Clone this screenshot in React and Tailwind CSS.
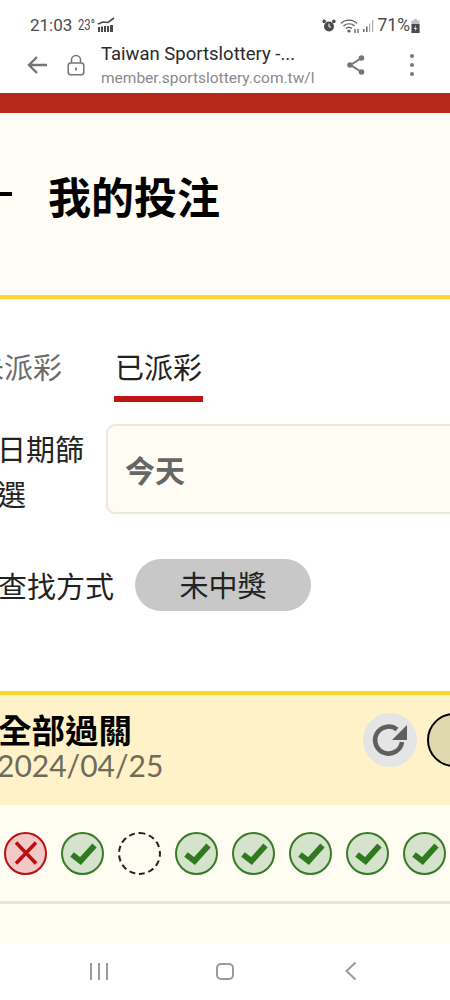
import React from "react";

const CJK = "font-['Noto_Sans_CJK_TC','Noto_Sans',sans-serif]";

function Check() {
  return (
    <div className="w-[43px] h-[43px] shrink-0 rounded-full bg-[#D5E2CC] border-2 border-[#367C25] flex items-center justify-center">
      <svg width="36" height="36" viewBox="0 0 36 36">
        <path d="M7 19.5 L15.5 26 L29.5 10.5" fill="none" stroke="#2F7A1E" strokeWidth="5.8" strokeLinecap="butt" strokeLinejoin="miter" />
      </svg>
    </div>
  );
}

function Cross() {
  return (
    <div className="w-[43px] h-[43px] shrink-0 rounded-full bg-[#F2C9C7] border-2 border-[#BC0F12] flex items-center justify-center">
      <svg width="30" height="30" viewBox="0 0 30 30">
        <path d="M5 4.5 L25 25.5 M25 4.5 L5 25.5" fill="none" stroke="#BC0F12" strokeWidth="3.6" strokeLinecap="butt" />
      </svg>
    </div>
  );
}

function StatusBar() {
  return (
    <div className="h-[35px] pt-[15px] pl-[30px] pr-[30px] flex items-center justify-between font-['Roboto',sans-serif] text-[#4a4a4a]">
      <div className="flex items-center">
        <span className="text-[17px] leading-none">21:03</span>
        <span className="text-[15px] leading-none ml-[6px] scale-x-75 origin-left w-[19px]">23°</span>
        <svg width="18" height="16" viewBox="0 0 18 16">
          <path d="M1 7 L6 5 L11 5.5 L17 1" fill="none" stroke="#4a4a4a" strokeWidth="1.6" />
          <path d="M1 10h2v5H1z M4 9.5h2V15H4z M7 9h2v6H7z M10 9h2v6h-2z M13 8h3v7h-3z" fill="#4a4a4a" />
        </svg>
      </div>
      <div className="flex items-center mt-[1px]">
        <svg width="14" height="14" viewBox="0 0 14 14">
          <circle cx="7" cy="7.5" r="5" fill="#4a4a4a" />
          <circle cx="2.2" cy="2.4" r="1.8" fill="#4a4a4a" />
          <circle cx="11.8" cy="2.4" r="1.8" fill="#4a4a4a" />
          <path d="M7 4.6V8h2" fill="none" stroke="#fff" strokeWidth="1" />
        </svg>
        <svg width="20" height="16" viewBox="0 0 20 16" className="ml-[4px]" fill="none" stroke="#5a5a5a" strokeWidth="1.2">
          <path d="M1 5.5 C5 1 13 1 17 5.5" />
          <path d="M3.5 8 C6.5 5 11.5 5 14.5 8" />
          <path d="M6 10.5 C8 9 10 9 12 10.5" />
          <circle cx="9" cy="13" r="1" fill="#5a5a5a" />
          <path d="M15 11v4 M18 15v-4" />
        </svg>
        <svg width="13" height="13" viewBox="0 0 13 13" className="ml-[2px]">
          <path d="M1 10h1.5v3H1z M4 7.5h1.5V13H4z" fill="#666" />
          <path d="M7 4.5h1.2V13H7z M10 1h1.2v12H10z" fill="#aaa" />
        </svg>
        <span className="text-[17.5px] leading-none ml-[3px]">71%</span>
        <svg width="9" height="14" viewBox="0 0 9 14" className="ml-[1px]">
          <path d="M3 0h3v1.5h2.5V14H.5V1.5H3z" fill="#c0c0c0" />
          <path d="M.5 5h8v9h-8z" fill="#4a4a4a" />
          <path d="M5 6 L3 10h1.5L4 12.5 6 9H4.5z" fill="#fff" />
        </svg>
      </div>
    </div>
  );
}

function BrowserBar() {
  return (
    <div className="h-[58px] flex items-center font-['Roboto',sans-serif]">
      <svg width="24" height="24" viewBox="0 0 24 24" className="ml-[26px] mt-[2px] shrink-0" fill="none" stroke="#757575" strokeWidth="2.4">
        <path d="M21 12H3 M11 4 L3 12 L11 20" />
      </svg>
      <svg width="18" height="22" viewBox="0 0 18 22" className="ml-[17px] mt-[2px] shrink-0" fill="none" stroke="#757575" strokeWidth="1.5">
        <path d="M4.5 9V6a4.5 4.5 0 0 1 9 0v3" />
        <rect x="1.2" y="9" width="15.6" height="11.8" rx="2.5" />
        <path d="M9 13.5v3" strokeWidth="1.8" />
      </svg>
      <div className="ml-[16px] w-[213px] overflow-hidden shrink-0 mt-[3px]">
        <div className="text-[18.5px] leading-[24px] text-[#2a2a2a] whitespace-nowrap">Taiwan Sportslottery -...</div>
        <div className="text-[15.5px] leading-[22px] text-[#8a8a8a] whitespace-nowrap mt-[1px]">member.sportslottery.com.tw/lo</div>
      </div>
      <svg width="20" height="22" viewBox="0 0 20 22" className="ml-[32px] mt-[2px] shrink-0" fill="#757575" stroke="#757575" strokeWidth="2">
        <path d="M15.5 4 L4.5 11 L15.5 18" fill="none" />
        <circle cx="15.5" cy="4" r="1.8" />
        <circle cx="4" cy="11" r="1.8" />
        <circle cx="15.5" cy="18" r="1.8" />
      </svg>
      <div className="ml-[44px] mt-[2px] flex flex-col gap-[5px] shrink-0">
        <div className="w-[4px] h-[4px] rounded-full bg-[#757575]" />
        <div className="w-[4px] h-[4px] rounded-full bg-[#757575]" />
        <div className="w-[4px] h-[4px] rounded-full bg-[#757575]" />
      </div>
    </div>
  );
}

function Card() {
  return (
    <div className="mt-[80px] border-t-4 border-[#FFD52F] bg-[#FFFCF2] flex-1 overflow-hidden">
      <div className="h-[110px] bg-[#FFF2C8] flex items-start justify-between">
        <div className="ml-[-2px] mt-[15px]">
          <div className={`${CJK} font-bold text-[33.5px] leading-[38px] text-black`}>全部過關</div>
          <div className="font-['Lato',sans-serif] text-[30px] leading-[34px] text-[#6E6B5A] ml-[-1px]">2024/04/25</div>
        </div>
        <div className="flex items-center gap-[10px] mr-[-31px] mt-[18px]">
          <div className="w-[54px] h-[54px] rounded-full bg-[#E5E5E5] flex items-center justify-center">
            <svg width="40" height="40" viewBox="0 0 40 40" fill="none">
              <path d="M32 22 A13.5 13.5 0 1 1 27 9.5" stroke="#5F5F5F" strokeWidth="4.6" />
              <path d="M37 5 V20 H22 Z" fill="#5F5F5F" />
            </svg>
          </div>
          <div className="w-[54px] h-[54px] rounded-full bg-[#E0D8AE] border-2 border-black" />
        </div>
      </div>
      <div className="h-[96px] flex items-center gap-[14px] pl-[4px] border-b-[3px] border-[#E8E4DA] box-content">
        <Cross />
        <Check />
        <div className="w-[43px] h-[43px] shrink-0 rounded-full border-2 border-dashed border-[#222]" />
        <Check />
        <Check />
        <Check />
        <Check />
        <Check />
      </div>
    </div>
  );
}

export default function App() {
  return (
    <div className="w-[450px] h-[1000px] overflow-hidden bg-white flex flex-col">
      <StatusBar />
      <BrowserBar />
      <div className="h-[20px] shrink-0 bg-[#B5281A]" />
      <main className={`${CJK} flex-1 flex flex-col overflow-hidden min-h-0 mt-px`}>
        <div className="h-[185px] shrink-0 bg-[#FFFDF5] border-b-[4px] border-[#FFD52F] flex items-center">
          <div className="w-[12px] h-[4px] bg-black shrink-0 mt-[-21px]" />
          <h1 className="ml-[36px] text-[43px] leading-none font-bold text-black mt-[-18px]">我的投注</h1>
        </div>
        <div className="flex items-start ml-[-26px] mt-[45px] text-[29px] leading-[44px]">
          <div className="px-[1px] h-[58px] text-[#6b6b6b]">未派彩</div>
          <div className="ml-[51px] px-[1px] h-[58px] text-[#222] border-b-[6px] border-[#BF1515]">已派彩</div>
        </div>
        <div className="flex items-center mt-[22px] ml-[-3px]">
          <div className="w-[88px] shrink-0 pt-[2px] text-[29px] leading-[45px] text-[#222] [word-break:break-all] h-[90px]">日期篩選</div>
          <div className="ml-[21px] flex-1 min-w-[380px] h-[90px] bg-[#FFFCF3] border-2 border-[#EDE8D8] rounded-[9px] flex items-center pl-[17px] text-[30px] font-bold text-[#666]">今天</div>
        </div>
        <div className="flex items-center mt-[45px] ml-[-2px]">
          <div className="text-[29px] leading-[44px] text-[#222] whitespace-nowrap">查找方式</div>
          <div className="ml-[21px] w-[176px] h-[52px] rounded-full bg-[#C8C8C8] flex items-center justify-center text-[29px] text-[#222]">未中獎</div>
        </div>
        <Card />
      </main>
      <nav className="h-[57px] shrink-0 bg-white flex items-center pb-[1px]">
        <div className="ml-[90px] flex gap-[6px]">
          <div className="w-[2px] h-[17px] bg-[#9a9a9a]" />
          <div className="w-[2px] h-[17px] bg-[#9a9a9a]" />
          <div className="w-[2px] h-[17px] bg-[#9a9a9a]" />
        </div>
        <div className="ml-[108px] w-[18px] h-[17px] rounded-[5px] border-2 border-[#9a9a9a]" />
        <svg width="14" height="20" viewBox="0 0 14 20" className="ml-[110px]" fill="none" stroke="#9a9a9a" strokeWidth="2">
          <path d="M11.5 1.5 L2.5 10 L11.5 18.5" />
        </svg>
      </nav>
    </div>
  );
}
